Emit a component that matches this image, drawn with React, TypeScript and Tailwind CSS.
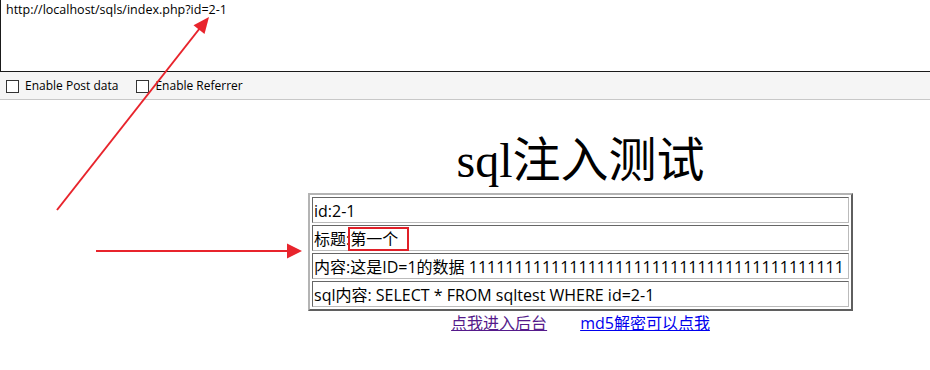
import React from 'react'

const ones = '1'.repeat(41)

const rows = [
  'id:2-1',
  '标题:第一个',
  `内容:这是ID=1的数据 ${ones}`,
  'sql内容: SELECT * FROM sqltest WHERE id=2-1',
]

function Checkbox({ label }: { label: string }) {
  return (
    <label className="flex items-center gap-[6px]">
      <span className="block w-[13px] h-[13px] border border-[#333] bg-white" />
      <span>{label}</span>
    </label>
  )
}

export default function App() {
  return (
    <div className="relative w-[930px] h-[370px] overflow-hidden bg-white text-black font-['Open_Sans','Noto_Sans_CJK_SC',sans-serif]">
      {/* url box */}
      <div className="h-[72px] border-l border-b border-[#1a1a1a] pl-[5px] pt-[2px] text-[12.5px] leading-[16px]">
        http://localhost/sqls/index.php?id=2-1
      </div>

      {/* options bar */}
      <div className="h-[28px] bg-[#f5f5f5] border-b border-[#c8c8c8] flex items-center pl-[6px] gap-[18px] text-[12px] pt-[1px]">
        <Checkbox label="Enable Post data" />
        <Checkbox label="Enable Referrer" />
      </div>

      {/* page */}
      <div className="flex flex-col items-center pl-[231px]">
        <h1 className="mt-[33px] text-[48px] leading-[56px] font-normal font-['Liberation_Serif','Noto_Sans_CJK_SC',serif]">
          sql注入测试
        </h1>
        <table className="mt-[4px] w-[545px] border-separate border-spacing-[2px] border-2 border-t-[#b4b4b4] border-l-[#b4b4b4] border-r-[#5f5f5f] border-b-[#5f5f5f] text-[16px]">
          <tbody>
            {rows.map((r) => (
              <tr key={r}>
                <td className="h-[26px] p-0 pl-px pt-px leading-[22px] whitespace-nowrap border border-t-[#666] border-l-[#666] border-r-[#bbb] border-b-[#bbb]">
                  {r}
                </td>
              </tr>
            ))}
          </tbody>
        </table>
        <div className="flex gap-[33px] text-[16px] leading-[22px] mt-[1px]">
          <a href="#" className="text-[#551a8b] underline">点我进入后台</a>
          <a href="#" className="text-[#0000ee] underline">md5解密可以点我</a>
        </div>
      </div>

      {/* annotations */}
      <svg className="absolute inset-0 pointer-events-none" width="930" height="370">
        <line x1="57" y1="210" x2="200" y2="28" stroke="#e8242c" strokeWidth="2" />
        <polygon points="209,17 204.5,33.9 193.5,25.2" fill="#e8242c" />
        <line x1="96" y1="251" x2="288" y2="251" stroke="#e8242c" strokeWidth="2" />
        <polygon points="302,251 287,243.5 287,258.5" fill="#e8242c" />
        <rect x="349" y="228" width="59" height="22" fill="none" stroke="#e02028" strokeWidth="2" />
      </svg>
    </div>
  )
}
